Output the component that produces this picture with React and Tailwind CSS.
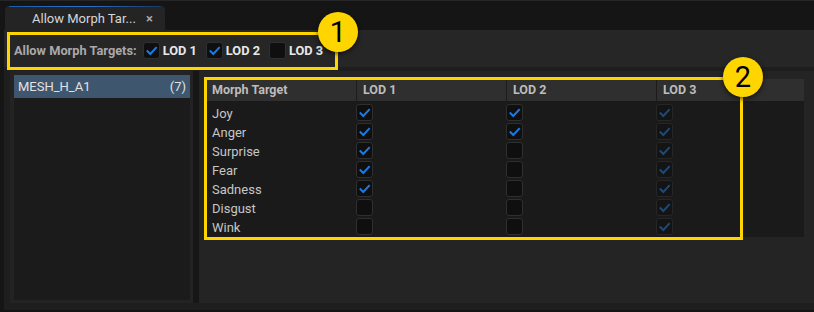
import React from 'react';

const rows = [
  { name: 'Joy', lod1: true, lod2: true },
  { name: 'Anger', lod1: true, lod2: true },
  { name: 'Surprise', lod1: true, lod2: false },
  { name: 'Fear', lod1: true, lod2: false },
  { name: 'Sadness', lod1: true, lod2: false },
  { name: 'Disgust', lod1: false, lod2: false },
  { name: 'Wink', lod1: false, lod2: false },
];

function Check({ checked, disabled }) {
  return (
    <div
      className={
        disabled
          ? 'w-[17px] h-[17px] rounded-[3px] border border-[#262626] bg-[#141414] flex-none'
          : 'w-[17px] h-[17px] rounded-[3px] border border-[#2f2f2f] bg-[#0f0f0f] flex-none'
      }
    >
      {checked && (
        <svg width="15" height="15" viewBox="0 0 15 15" className="block">
          <path
            d="M3.5 8.2 L6.3 11 L12 4.8"
            fill="none"
            stroke={disabled ? '#1d4a78' : '#1a7ae6'}
            strokeWidth="2"
            strokeLinecap="square"
          />
        </svg>
      )}
    </div>
  );
}

function Badge({ n }) {
  return (
    <div className="w-[40px] h-[40px] rounded-full bg-[#ffd500] flex items-center justify-center text-black text-[29px] leading-none shadow-[0_2px_5px_rgba(0,0,0,0.6)]">
      {n}
    </div>
  );
}

export default function App() {
  return (
    <div
      className="relative w-[814px] h-[312px] bg-[#151515] flex flex-col overflow-hidden"
      style={{ fontFamily: 'Roboto, "Liberation Sans", sans-serif' }}
    >
      {/* tab strip */}
      <div className="h-[30px] flex-none border-t border-[#262626] pt-[5px] pl-[5px]">
        <div className="relative w-[160px] h-[25px] bg-[#242424] rounded-t-[4px] flex items-center pl-[27px] pr-[12px] overflow-hidden">
          <div className="absolute top-0 left-[4px] right-[4px] h-[1px] bg-gradient-to-r from-[#1f5ca8] via-[#2a72d0] to-[#1a3a60]" />
          <span className="text-[13px] text-[#d6d6d6] flex-1 whitespace-nowrap">Allow Morph Tar...</span>
          <span className="text-[13px] text-[#a8a8a8] font-bold">×</span>
        </div>
      </div>

      {/* window body */}
      <div className="flex-1 flex flex-col ml-[4px] bg-[#1e1e1e] pb-[7px]">
        <div className="h-[37px] flex-none bg-[#262626] flex items-center pl-[10px] pt-[4px] whitespace-nowrap">
          <span className="text-[12.8px] font-bold text-[#a9a9a9]">Allow Morph Targets:</span>
          <div className="ml-[6px]"><Check checked /></div>
          <span className="ml-[3px] text-[12.8px] font-bold text-[#e8e8e8]">LOD 1</span>
          <div className="ml-[9px]"><Check checked /></div>
          <span className="ml-[3px] text-[12.8px] font-bold text-[#e8e8e8]">LOD 2</span>
          <div className="ml-[9px]"><Check checked={false} /></div>
          <span className="ml-[3px] text-[12.8px] font-bold text-[#e8e8e8]">LOD 3</span>
        </div>

        <div className="flex-1 flex mt-[4px]">
          {/* left list */}
          <div className="w-[183px] ml-[6px] bg-[#232323] pl-[4px] pr-[3px] pt-[4px] pb-[3px] flex">
            <div className="flex-1 bg-[#1b1b1b]">
              <div className="h-[23px] bg-[#3f566f] flex items-center justify-between pl-[4px] pr-[4px] text-[13px] text-[#e2e2e2]">
                <span>MESH_H_A1</span>
                <span>(7)</span>
              </div>
            </div>
          </div>
          {/* splitter */}
          <div className="w-[6px] bg-[#161616]" />
          {/* right panel */}
          <div className="flex-1 bg-[#242424] pl-[7px] pr-[10px] pt-[8px]">
            <div className="bg-[#1a1a1a] pb-[1px]">
              <div className="grid grid-cols-[150px_150px_150px_1fr] h-[22px] bg-[#2f2f2f] text-[12.5px] font-bold text-[#bdbdbd]">
                <div className="flex items-center pl-[6px]">Morph Target</div>
                <div className="flex items-center pl-[6px] border-l border-[#1c1c1c]">LOD 1</div>
                <div className="flex items-center pl-[6px] border-l border-[#1c1c1c]">LOD 2</div>
                <div className="flex items-center pl-[6px] border-l border-[#1c1c1c]">LOD 3</div>
              </div>
              <div className="pt-[2px]">
                {rows.map((r) => (
                  <div key={r.name} className="grid grid-cols-[150px_150px_150px_1fr] h-[19px] items-center">
                    <div className="pl-[6px] text-[13px] text-[#c6c6c6] leading-none pt-[1px]">{r.name}</div>
                    <div><Check checked={r.lod1} /></div>
                    <div><Check checked={r.lod2} /></div>
                    <div><Check checked disabled /></div>
                  </div>
                ))}
              </div>
            </div>
          </div>
        </div>
      </div>
      <div className="h-[2px] flex-none bg-[#141414]" />

      {/* annotations */}
      <div className="absolute left-[7px] top-[32px] w-[331px] h-[38px] border-[3px] border-[#ffd500] pointer-events-none" />
      <div className="absolute left-[318px] top-[12px]">
        <Badge n="1" />
      </div>
      <div className="absolute left-[204px] top-[77px] w-[539px] h-[163px] border-[3px] border-[#ffd500] pointer-events-none" />
      <div className="absolute left-[723px] top-[57px]">
        <Badge n="2" />
      </div>
    </div>
  );
}
